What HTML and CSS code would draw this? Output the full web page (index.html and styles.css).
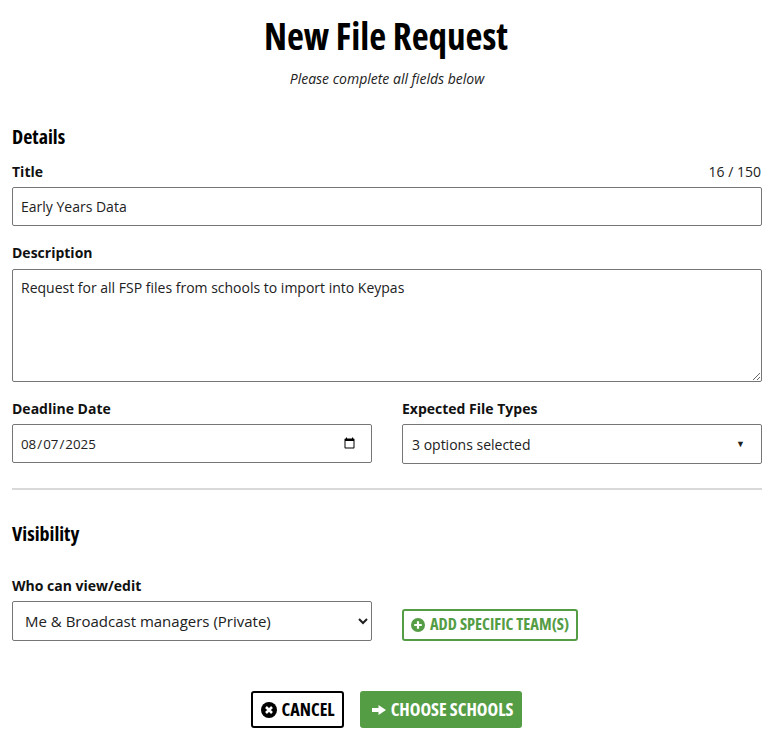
FILE: index.html
```html
<!DOCTYPE html>
<html lang="en">
<head>
    <meta charset="UTF-8">
    <meta name="viewport" content="width=device-width, initial-scale=1.0">
    <title>New File Request</title>
    <link rel="stylesheet" href="styles.css">
</head>
<body>
    <div class="container">
        <h1>New File Request</h1>
        <p class="intro">Please complete all fields below</p>

        <form id="request-form">
            <h2 class="details-heading">Details</h2>

            <div class="label-row">
                <label for="title">Title</label>
                <span class="counter">16 / 150</span>
            </div>
            <input type="text" id="title" class="field" value="Early Years Data">

            <label for="description" class="description-label">Description</label>
            <textarea id="description" class="field">Request for all FSP files from schools to import into Keypas</textarea>

            <div class="two-col dates">
                <div>
                    <label for="deadline">Deadline Date</label>
                    <input type="date" id="deadline" class="field" value="2025-08-07">
                </div>
                <div>
                    <label>Expected File Types</label>
                    <div class="multi-select">
                        <span>3 options selected</span>
                        <span class="caret">▼</span>
                    </div>
                </div>
            </div>

            <hr>

            <h2 class="visibility-heading">Visibility</h2>

            <div class="two-col visibility">
                <div>
                    <label for="who">Who can view/edit</label>
                    <select id="who" class="field">
                        <option>Me &amp; Broadcast managers (Private)</option>
                    </select>
                </div>
                <div class="team-cell">
                    <button type="button" class="btn btn-outline">
                        <svg class="icon" viewBox="0 0 14 14"><circle cx="7" cy="7" r="7" fill="currentColor"/><path d="M7 3.2v7.6M3.2 7h7.6" stroke="#fff" stroke-width="2.2"/></svg>
                        ADD SPECIFIC TEAM(S)
                    </button>
                </div>
            </div>

            <div class="actions">
                <button type="button" class="btn btn-cancel">
                    <svg class="icon" viewBox="0 0 16 16"><circle cx="8" cy="8" r="8" fill="currentColor"/><path d="M5 5l6 6M11 5l-6 6" stroke="#fff" stroke-width="2.6"/></svg>
                    CANCEL
                </button>
                <button type="submit" class="btn btn-primary">
                    <svg class="icon" viewBox="0 0 14 14"><path d="M0 5h6.5V2L14 7l-7.500 5V9H0z" fill="currentColor"/></svg>
                    CHOOSE SCHOOLS
                </button>
            </div>
        </form>
    </div>
</body>
</html>
```

FILE: styles.css
```css
:root {
    --green: #559d45;
    --border-color: #767676;
    --text-color: #212121;
}

* {
    box-sizing: border-box;
}

body {
    font-family: 'Open Sans', sans-serif;
    font-size: 14px;
    color: var(--text-color);
    background-color: #fff;
    margin: 0;
    padding: 0 16px 0 12px;
}

h1, h2, .btn {
    font-family: 'Open Sans', sans-serif;
    font-stretch: condensed;
    font-weight: 700;
    color: #000;
}

h1 {
    font-size: 37px;
    line-height: 48px;
    text-align: center;
    margin: 12px 2px 0 0;
}

.intro {
    font-style: italic;
    text-align: center;
    line-height: 20px;
    margin: 9px 0 0;
}

h2 {
    font-size: 20px;
    line-height: 28px;
    margin: 0;
}

.details-heading {
    margin-top: 34px;
}

label {
    display: block;
    font-weight: 700;
    line-height: 20px;
    color: #111;
}

.label-row {
    display: flex;
    justify-content: space-between;
    margin-top: 11px;
}

.counter {
    line-height: 20px;
    padding-right: 1px;
}

.field {
    display: block;
    width: 100%;
    height: 39px;
    margin-top: 5px;
    padding: 0 8px;
    font-family: 'Open Sans', sans-serif;
    font-size: 14px;
    color: var(--text-color);
    background-color: #fff;
    border: 1px solid var(--border-color);
    border-radius: 2px;
}

.description-label {
    margin-top: 17px;
}

textarea.field {
    height: 113px;
    margin-top: 6px;
    padding: 8px;
}

input[type="date"].field {
    padding-left: 7px;
    font-size: 13.33px;
}

input[type="date"]::-webkit-calendar-picker-indicator {
    margin-right: 5px;
}

.two-col {
    display: grid;
    grid-template-columns: 360px 360px;
    gap: 30px;
}

.dates {
    margin-top: 17px;
}

.multi-select {
    display: flex;
    justify-content: space-between;
    align-items: center;
    height: 40px;
    margin-top: 5px;
    padding: 1px 16px 0 9px;
    border: 1px solid var(--border-color);
    border-radius: 2px;
}

.caret {
    font-size: 9px;
    margin-top: -3px;
}

hr {
    height: 2px;
    margin: 24px 0 0;
    border: 0;
    background-color: #d9d9d9;
}

.visibility-heading {
    margin-top: 30px;
}

.visibility {
    margin-top: 28px;
}

select.field {
    height: 40px;
    padding: 0 8px;
    font-size: 15px;
}

.team-cell {
    display: flex;
    align-items: flex-end;
}

.btn {
    display: inline-flex;
    align-items: center;
    gap: 5px;
    font-size: 18px;
    border-radius: 3px;
    cursor: pointer;
    background-color: #fff;
}

.icon {
    width: 14px;
    height: 14px;
    flex: none;
}

.btn-outline {
    height: 32px;
    padding: 0 7px 3px 7px;
    font-size: 16.4px;
    color: var(--green);
    border: 2px solid var(--green);
}

.btn-outline .icon {
    margin-top: 3px;
}

.actions {
    display: flex;
    justify-content: center;
    gap: 16px;
    margin-top: 50px;
    padding-right: 1px;
}

.btn-cancel {
    height: 37px;
    padding: 0 7px 2px 8px;
    color: #000;
    border: 2px solid #000;
}

.btn-cancel .icon {
    width: 16px;
    height: 16px;
    margin-top: 2px;
}

.btn-primary {
    height: 37px;
    padding: 0 9px 2px 12px;
    color: #fff;
    background-color: var(--green);
    border: 0;
}

.btn-primary .icon {
    margin-top: 2px;
}
```
